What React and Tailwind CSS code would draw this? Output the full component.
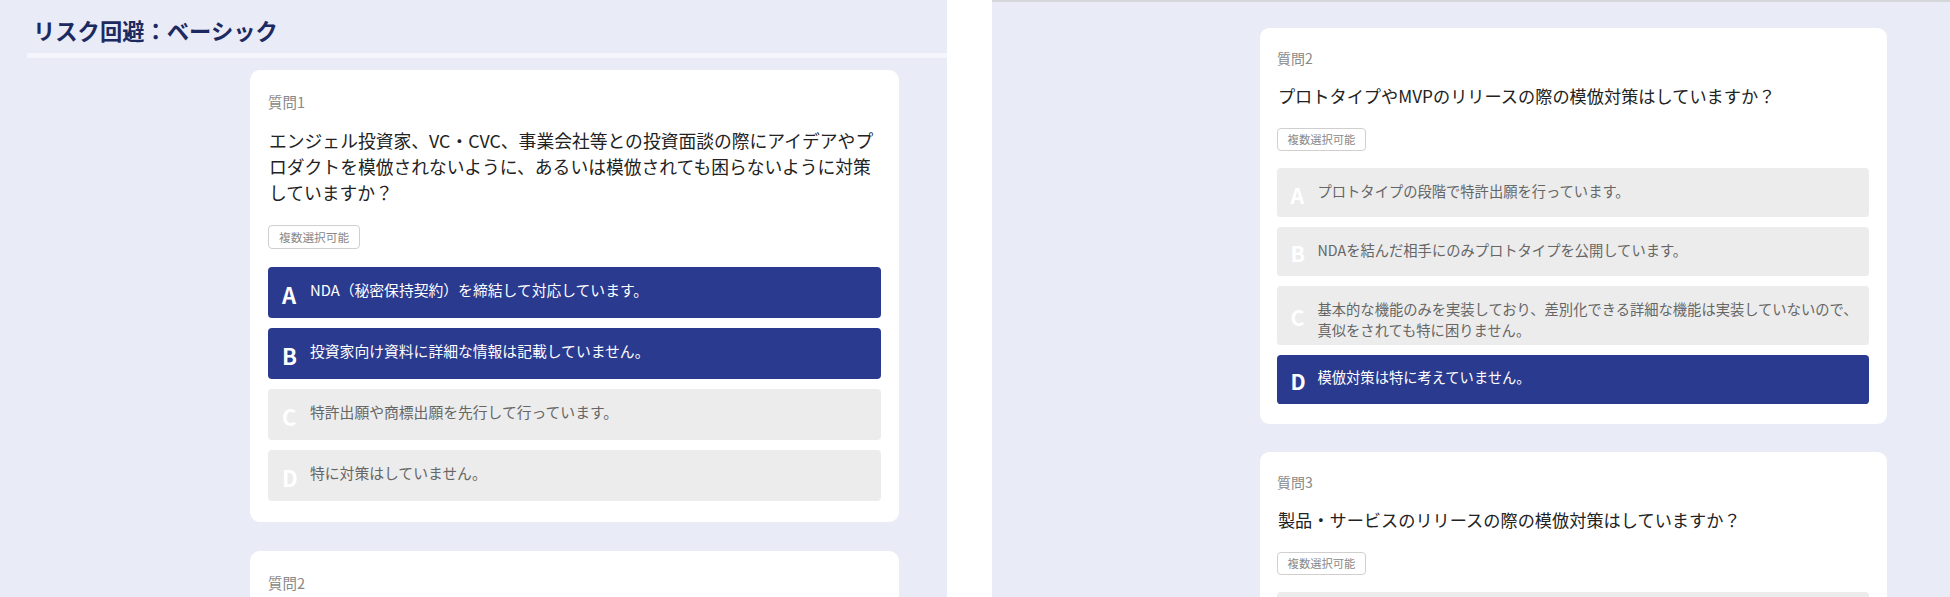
import React from "react";

const QUESTIONS = [
  {
    no: 1,
    text: "エンジェル投資家、VC・CVC、事業会社等との投資面談の際にアイデアやプロダクトを模倣されないように、あるいは模倣されても困らないように対策していますか？",
    options: [
      { key: "A", text: "NDA（秘密保持契約）を締結して対応しています。", selected: true },
      { key: "B", text: "投資家向け資料に詳細な情報は記載していません。", selected: true },
      { key: "C", text: "特許出願や商標出願を先行して行っています。" },
      { key: "D", text: "特に対策はしていません。" },
    ],
  },
  {
    no: 2,
    text: "プロトタイプやMVPのリリースの際の模倣対策はしていますか？",
    options: [
      { key: "A", text: "プロトタイプの段階で特許出願を行っています。" },
      { key: "B", text: "NDAを結んだ相手にのみプロトタイプを公開しています。" },
      {
        key: "C",
        text: "基本的な機能のみを実装しており、差別化できる詳細な機能は実装していないので、真似をされても特に困りません。",
      },
      { key: "D", text: "模倣対策は特に考えていません。", selected: true },
    ],
  },
  {
    no: 3,
    text: "製品・サービスのリリースの際の模倣対策はしていますか？",
    options: [
      { key: "A", text: "リリース前に特許出願や商標出願を行っています。" },
      { key: "B", text: "利用規約でリバースエンジニアリングを禁止しています。" },
      { key: "C", text: "模倣対策は特に考えていません。" },
    ],
  },
];

function Option({ opt }) {
  return (
    <div
      className={`flex min-h-[51px] rounded-[4px] pl-[14px] pr-[8px] pt-3 pb-[5px] ${
        opt.selected ? "bg-[#2a3a8f] text-white" : "bg-[#ececec] text-[#666]"
      }`}
    >
      <span className="w-[28px] shrink-0 self-center mb-1 text-[22px] font-bold leading-none text-white">
        {opt.key}
      </span>
      <p className="text-[14.8px] leading-[22px]">{opt.text}</p>
    </div>
  );
}

function QuestionCard({ q }) {
  return (
    <div className="w-[649px] shrink-0 rounded-[10px] bg-white px-[18px] pt-[22px] pb-[21px]">
      <p className="text-[14.5px] leading-[20px] text-[#888]">質問{q.no}</p>
      <p className="mt-[15px] pl-px text-[17.8px] leading-[26px] text-[#222]">{q.text}</p>
      <div className="mt-[20px] inline-flex h-[24px] items-center rounded-[4px] border border-[#cfcfcf] px-[10px] text-[11.7px] text-[#888]">
        複数選択可能
      </div>
      <div className="mt-[18px] flex flex-col gap-[10px]">
        {q.options.map((o) => (
          <Option key={o.key} opt={o} />
        ))}
      </div>
    </div>
  );
}

export default function App() {
  return (
    <div className="flex h-[597px] w-[1950px] overflow-hidden bg-white font-['Noto_Sans_CJK_JP','Noto_Sans',sans-serif]">
      <div className="w-[947px] shrink-0 bg-[#e9ecf7] pt-[14px]">
        <h1 className="pl-[33px] text-[22.3px] font-bold leading-[33px] text-[#1d2a5f]">
          リスク回避：ベーシック
        </h1>
        <div className="ml-[27px] mt-[6px] h-[5px] bg-[#f5f6fb]" />
        <div className="ml-[250px] mt-[12px] flex flex-col gap-[29px]">
          <QuestionCard q={QUESTIONS[0]} />
          <QuestionCard q={QUESTIONS[1]} />
        </div>
      </div>

      <div className="w-[45px] shrink-0 bg-white" />

      <div className="flex-1 border-t-2 border-[#d5d6da] bg-[#e9ecf7]">
        <div className="[zoom:0.966] pl-[277px] pt-[27px] flex flex-col gap-[29px]">
          <QuestionCard q={QUESTIONS[1]} />
          <QuestionCard q={QUESTIONS[2]} />
        </div>
      </div>
    </div>
  );
}
